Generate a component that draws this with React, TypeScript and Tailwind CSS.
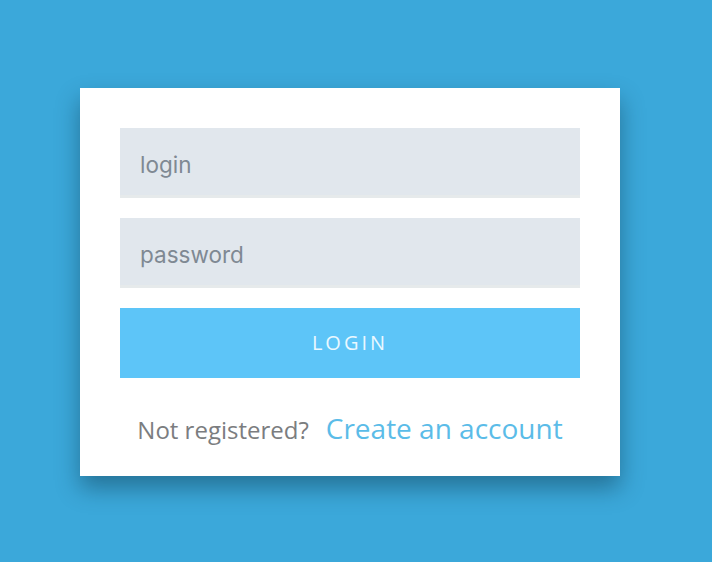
import React from 'react';

export default function App() {
  return (
    <div className="w-[712px] h-[562px] bg-[#3ba8da] flex items-start justify-start pl-20 pt-[88px]">
      <div className="w-[540px] bg-white px-10 pt-10 pb-[27px] shadow-[0_12px_22px_rgba(10,50,70,0.45)]">
        <input
          type="text"
          placeholder="login"
          className="block w-full h-[70px] bg-[#e1e7ed] px-5 pt-[5px] text-[22.5px] text-[#59636c] placeholder:text-[#7f8993] outline-none font-['Inter',sans-serif] border-b-[3px] border-[#e6eaeb]"
        />
        <input
          type="password"
          placeholder="password"
          className="block w-full h-[70px] mt-5 bg-[#e1e7ed] px-5 pt-[5px] text-[22.5px] text-[#59636c] placeholder:text-[#7f8993] outline-none font-['Inter',sans-serif] border-b-[3px] border-[#e6eaeb]"
        />
        <button className="block w-full h-[70px] mt-5 bg-[#5dc5f8] text-[#eaf8ff] text-[20px] tracking-[3px] font-['Open_Sans',sans-serif]">
          LOGIN
        </button>
        <div className="flex items-baseline justify-center gap-[17px] mt-[29px] font-['Open_Sans',sans-serif]">
          <span className="text-[24px] text-[#7b7d80]">Not registered?</span>
          <a href="#" className="text-[28px] text-[#5bbce8]">Create an account</a>
        </div>
      </div>
    </div>
  );
}
